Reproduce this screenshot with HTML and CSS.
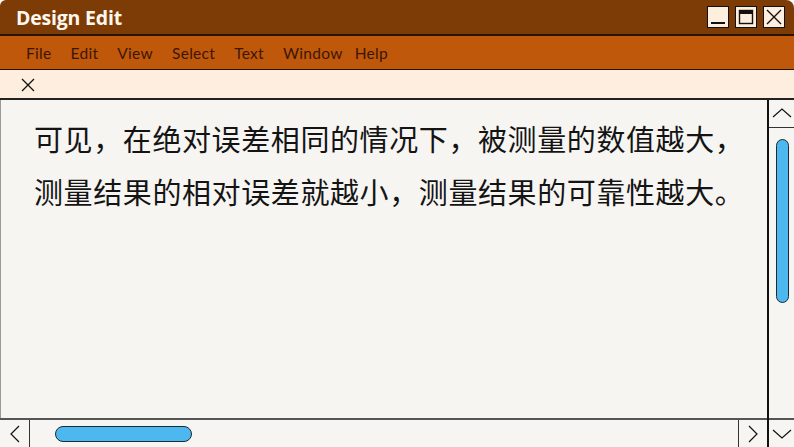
FILE: index.html
```html
<!DOCTYPE html>
<html lang="zh">
<head>
<meta charset="utf-8">
<title>Design Edit</title>
<link rel="stylesheet" href="styles.css">
</head>
<body>
<div class="window">
  <div class="titlebar">
    <div class="title">Design Edit</div>
    <div class="controls">
      <div class="ctl"><svg width="20" height="20" viewBox="0 0 20 20"><line x1="3" y1="16" x2="17" y2="16" stroke="#111" stroke-width="2"/></svg></div>
      <div class="ctl"><svg width="20" height="20" viewBox="0 0 20 20"><rect x="3.5" y="3.5" width="13" height="13" fill="none" stroke="#111" stroke-width="1.4"/><rect x="3" y="3" width="14" height="4" fill="#111"/></svg></div>
      <div class="ctl"><svg width="20" height="20" viewBox="0 0 20 20"><path d="M3 3 L17 17 M17 3 L3 17" stroke="#111" stroke-width="1.4" fill="none"/></svg></div>
    </div>
  </div>
  <div class="menubar">
    <span class="menu">File</span>
    <span class="menu">Edit</span>
    <span class="menu">View</span>
    <span class="menu">Select</span>
    <span class="menu">Text</span>
    <span class="menu">Window</span>
    <span class="menu menu-last">Help</span>
  </div>
  <div class="tabbar">
    <svg class="tabclose" width="14" height="14" viewBox="0 0 14 14"><path d="M1 1 L13 13 M13 1 L1 13" stroke="#111" stroke-width="1.3" fill="none"/></svg>
  </div>
  <div class="body">
    <div class="left">
      <div class="content">
        <p class="line">可见，在绝对误差相同的情况下，被测量的数值越大，</p>
        <p class="line">测量结果的相对误差就越小，测量结果的可靠性越大。</p>
      </div>
      <div class="hscroll">
        <div class="hbtn hbtn-left"><svg width="12" height="18" viewBox="0 0 12 18"><path d="M10 1 L2 9 L10 17" stroke="#111" stroke-width="1.2" fill="none"/></svg></div>
        <div class="htrack"><div class="hthumb"></div></div>
        <div class="hbtn hbtn-right"><svg width="12" height="18" viewBox="0 0 12 18"><path d="M2 1 L10 9 L2 17" stroke="#111" stroke-width="1.2" fill="none"/></svg></div>
      </div>
    </div>
    <div class="vscroll">
      <div class="vbtn vbtn-up"><svg width="20" height="12" viewBox="0 0 20 12"><path d="M1 10 L10 2 L19 10" stroke="#111" stroke-width="1.2" fill="none"/></svg></div>
      <div class="vtrack"><div class="vthumb"></div></div>
      <div class="vbtn vbtn-down"><svg width="20" height="12" viewBox="0 0 20 12"><path d="M1 2 L10 10 L19 2" stroke="#111" stroke-width="1.2" fill="none"/></svg></div>
    </div>
  </div>
</div>
</body>
</html>
```

FILE: styles.css
```css
html, body {
  margin: 0;
  padding: 0;
  width: 794px;
  height: 447px;
  overflow: hidden;
  background: #ffffff;
}
.window {
  width: 794px;
  height: 447px;
  display: flex;
  flex-direction: column;
  background: #f7f5f2;
  border-radius: 6px 8px 0 0;
  overflow: hidden;
}
.titlebar {
  height: 34px;
  flex: none;
  background: #7d3c06;
  border-bottom: 2px solid #2a1200;
  display: flex;
  align-items: center;
  justify-content: space-between;
  padding: 0 9px 0 16px;
}
.title {
  font-family: "Open Sans", "Noto Sans", sans-serif;
  font-weight: 700;
  font-size: 19.5px;
  color: #fff8ee;
  letter-spacing: -0.2px;
  margin-top: 1px;
}
.controls {
  display: flex;
  gap: 6px;
  margin-top: -1px;
}
.ctl {
  width: 20px;
  height: 20px;
  border: 1.5px solid #111;
  background: #fdeede;
  display: flex;
}
.menubar {
  height: 32px;
  flex: none;
  background: #c0580b;
  border-bottom: 1.5px solid #2a1200;
  display: flex;
  align-items: center;
  padding: 2px 0 0 26px;
  box-sizing: border-box;
  height: 33.5px;
  font-family: "Lato", "Noto Sans", sans-serif;
  font-size: 15.5px;
  color: #3c1604;
}
.menu {
  margin-right: 19px;
  letter-spacing: 0.3px;
}
.menu-last {
  margin-left: -7px;
}
.tabbar {
  height: 28px;
  flex: none;
  background: #fdeedf;
  border-bottom: 2px solid #222;
  display: flex;
  align-items: center;
  padding-left: 21px;
}
.tabclose {
  margin-top: 2px;
}
.body {
  flex: 1;
  display: flex;
  min-height: 0;
}
.left {
  flex: 1;
  display: flex;
  flex-direction: column;
  min-width: 0;
}
.content {
  flex: 1;
  border-left: 1px solid #9a9a9a;
  padding: 12px 0 0 33px;
  font-family: "Noto Sans CJK SC", sans-serif;
  font-size: 29px;
  letter-spacing: 0.6px;
  line-height: 53px;
  color: #141414;
}
.line {
  margin: 0;
  white-space: nowrap;
}
.hscroll {
  height: 27px;
  flex: none;
  border-top: 2px solid #555;
  display: flex;
  background: #f7f5f2;
}
.hbtn {
  width: 28px;
  display: flex;
  align-items: center;
  justify-content: center;
}
.hbtn-left {
  border-right: 1.5px solid #333;
  margin-left: 1px;
}
.hbtn-right {
  border-left: 1.5px solid #333;
}
.htrack {
  flex: 1;
  display: flex;
  align-items: center;
  padding-left: 25px;
}
.hthumb {
  width: 135px;
  height: 14px;
  background: #4cb8ef;
  border: 1.5px solid #1d2a33;
  border-radius: 8px;
}
.vscroll {
  width: 25px;
  flex: none;
  border-left: 2px solid #111;
  display: flex;
  flex-direction: column;
}
.vbtn {
  height: 27px;
  flex: none;
  display: flex;
  align-items: center;
  justify-content: center;
}
.vbtn-up {
  border-bottom: 1.5px solid #333;
}
.vbtn-down {
  border-top: 2px solid #555;
}
.vtrack {
  flex: 1;
  padding: 11px 0 0 7px;
}
.vthumb {
  width: 11px;
  height: 162px;
  background: #4cb8ef;
  border: 1.5px solid #1d2a33;
  border-radius: 8px;
}
```
